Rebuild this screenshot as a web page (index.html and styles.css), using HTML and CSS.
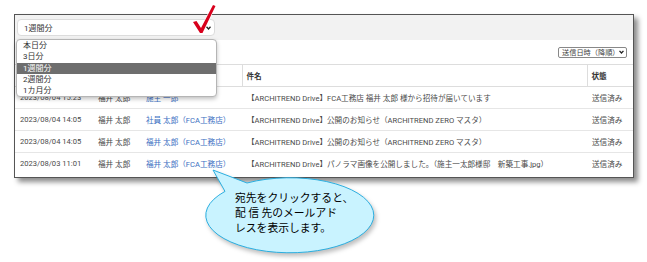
FILE: index.html
```html
<!DOCTYPE html>
<html lang="ja">
<head>
  <meta charset="UTF-8">
  <title>送信履歴</title>
  <link rel="stylesheet" href="styles.css">
</head>
<body>
  <div class="stage">
    <div class="panel">
      <div class="toolbar">
        <div class="period-select">
          <span>1週間分</span>
          <svg class="chev" width="5" height="4" viewBox="0 0 5 4"><path d="M0.5 0.8 L2.5 3 L4.5 0.8" fill="none" stroke="#222" stroke-width="1.3"/></svg>
        </div>
      </div>

      <div class="sortbar">
        <div class="sort-select">
          <span>送信日時（降順）</span>
          <svg class="chev" width="5" height="4" viewBox="0 0 5 4"><path d="M0.5 0.8 L2.5 3 L4.5 0.8" fill="none" stroke="#222" stroke-width="1.3"/></svg>
        </div>
      </div>

      <table class="log">
        <colgroup>
          <col class="c-date"><col class="c-from"><col class="c-to"><col class="c-subject"><col class="c-status">
        </colgroup>
        <thead>
          <tr>
            <th></th>
            <th></th>
            <th></th>
            <th class="sep">件名</th>
            <th class="sep">状態</th>
          </tr>
        </thead>
        <tbody>
          <tr>
            <td>2023/08/04 15:23</td>
            <td>福井 太郎</td>
            <td><a class="to">施主 一郎</a></td>
            <td>【ARCHITREND Drive】FCA工務店 福井 太郎 様から招待が届いています</td>
            <td>送信済み</td>
          </tr>
          <tr>
            <td>2023/08/04 14:05</td>
            <td>福井 太郎</td>
            <td><a class="to">社員 太郎（FCA工務店）</a></td>
            <td>【ARCHITREND Drive】公開のお知らせ（ARCHITREND ZERO マスタ）</td>
            <td>送信済み</td>
          </tr>
          <tr>
            <td>2023/08/04 14:05</td>
            <td>福井 太郎</td>
            <td><a class="to">福井 太郎（FCA工務店）</a></td>
            <td>【ARCHITREND Drive】公開のお知らせ（ARCHITREND ZERO マスタ）</td>
            <td>送信済み</td>
          </tr>
          <tr>
            <td>2023/08/03 11:01</td>
            <td>福井 太郎</td>
            <td><a class="to">福井 太郎（FCA工務店）</a></td>
            <td>【ARCHITREND Drive】パノラマ画像を公開しました。（施主一太郎様邸　新築工事.jpg）</td>
            <td>送信済み</td>
          </tr>
        </tbody>
      </table>

      <!-- open list of the period select -->
      <ul class="period-list">
        <li>本日分</li>
        <li>3日分</li>
        <li class="selected">1週間分</li>
        <li>2週間分</li>
        <li>1カ月分</li>
      </ul>
    </div>

    <!-- red check over the select -->
    <svg class="check" width="30" height="34" viewBox="0 0 30 34">
      <path d="M4 20 L7.5 19 L12 26 L24 3 L26.5 4 L13.5 31 L11 31 Z" fill="#d8001c" stroke="#fff" stroke-width="1.2" stroke-linejoin="round" paint-order="stroke"/>
    </svg>

    <!-- callout -->
    <svg class="balloon" width="200" height="100" viewBox="195 160 200 100">
      <path d="M225 191.4 L213 170 L247 183 A84 37.5 0 1 1 225 191.4 Z" fill="#c9f3ff" stroke="#2aaee0" stroke-width="1"/>
    </svg>
    <div class="balloon-text">宛先をクリックすると、<br>配 信 先のメールアド<br>レスを表示します。</div>
  </div>
</body>
</html>
```

FILE: styles.css
```css
body {
  margin: 0;
  background: #fff;
  font-family: Roboto, "Noto Sans CJK JP", sans-serif;
  color: #444;
}
.stage {
  position: relative;
  width: 647px;
  height: 262px;
  padding: 14px 0 0 14px;
  box-sizing: border-box;
}
.panel {
  position: relative;
  width: 620px;
  height: 164px;
  box-sizing: border-box;
  border: 1px solid #555;
  background: #fff;
  box-shadow: 4px 4px 5px rgba(0,0,0,0.45);
}
.toolbar {
  background: #f2f2f2;
  height: 25px;
  padding: 4px 0 0 2px;
  box-sizing: border-box;
}
.period-select {
  width: 198px;
  height: 17px;
  box-sizing: border-box;
  background: #fff;
  border: 1px solid #dcdcdc;
  border-radius: 4px;
  display: flex;
  align-items: center;
  justify-content: space-between;
  padding: 0 3px 0 6px;
  font-size: 8px;
  color: #333;
}
.chev {
  display: block;
}
.sortbar {
  height: 24px;
  display: flex;
  align-items: center;
  justify-content: flex-end;
  padding-right: 6px;
  border-bottom: 1px solid #ddd;
}
.sort-select {
  height: 11px;
  width: 69px;
  box-sizing: border-box;
  border: 1px solid #888;
  border-radius: 2px;
  display: flex;
  align-items: center;
  justify-content: space-between;
  padding: 0 2px 0 3px;
  font-size: 7.2px;
  color: #444;
}
.log {
  width: 100%;
  border-collapse: collapse;
  table-layout: fixed;
  font-size: 7.6px;
}
.c-date { width: 78px; }
.c-from { width: 48px; }
.c-to { width: 101px; }
.c-subject { width: 345px; }
.c-status { width: 46px; }
.log th {
  height: 21px;
  text-align: left;
  font-weight: bold;
  color: #333;
  padding: 0 4px;
  border-bottom: 1px solid #ddd;
}
.log th.sep {
  border-left: 1px solid #ddd;
}
.log td {
  height: 21px;
  padding: 0 4px 0 5px;
  white-space: nowrap;
  color: #4a4a4a;
  border-bottom: 1px solid #e6e6e6;
}
.log tbody tr:last-child td {
  border-bottom: none;
}
.to {
  color: #3b6fc2;
}
.period-list {
  position: absolute;
  left: 1px;
  top: 24px;
  width: 199px;
  margin: 0;
  padding: 0;
  list-style: none;
  background: #fff;
  border: 1px solid #b5b5b5;
  border-radius: 4px;
  box-shadow: 0 2px 4px rgba(0,0,0,0.25);
  font-size: 8px;
  color: #333;
}
.period-list li {
  height: 11.3px;
  line-height: 11.3px;
  padding-left: 6px;
}
.period-list li.selected {
  background: #6e6e6e;
  color: #fff;
}
.check {
  position: absolute;
  left: 189px;
  top: 2px;
}
.balloon {
  position: absolute;
  left: 195px;
  top: 160px;
  filter: drop-shadow(2px 3px 2px rgba(0,0,0,0.25));
}
.balloon-text {
  position: absolute;
  left: 235px;
  top: 190px;
  font-family: "Noto Sans CJK JP", sans-serif;
  font-size: 10.8px;
  line-height: 14.8px;
  color: #000;
  white-space: nowrap;
}
```
